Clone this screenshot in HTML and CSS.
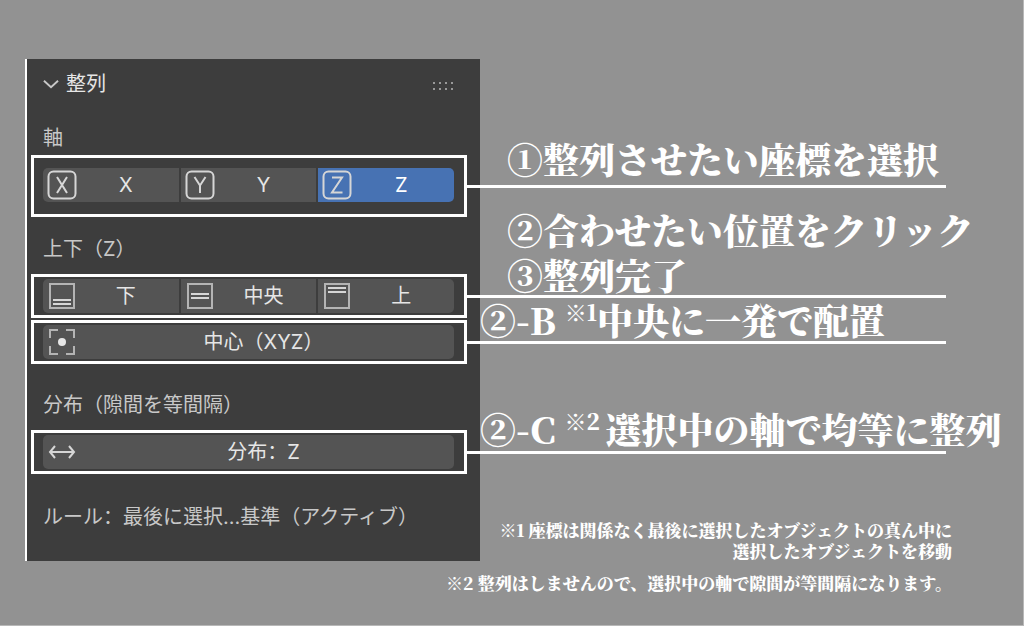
FILE: index.html
```html
<!DOCTYPE html>
<html lang="ja">
<head>
    <meta charset="UTF-8">
    <meta name="viewport" content="width=device-width, initial-scale=1.0">
    <title>整列</title>
    <link rel="stylesheet" href="styles.css">
</head>
<body>
    <main class="page">
        <section class="panel">
            <header class="panel_header">
                <svg class="chevron" viewBox="0 0 17 17"><path d="M1 5l7.500 7 7.500-7"/></svg>
                <h1>整列</h1>
                <svg class="grip" viewBox="0 0 20 8">
                    <path d="M0 0h2v2h-2zM6 0h2v2h-2zM12 0h2v2h-2zM18 0h2v2h-2zM0 6h2v2h-2zM6 6h2v2h-2zM12 6h2v2h-2zM18 6h2v2h-2z"/>
                </svg>
            </header>

            <p class="group_label">軸</p>
            <div class="frame frame_axis">
                <div class="buttons">
                    <button type="button">
                        <svg viewBox="0 0 30 30"><rect x="1.500" y="1.500" width="27" height="27" rx="5"/><path d="M10 7l10 16M20 7L10 23"/></svg>
                        <span>X</span>
                    </button>
                    <button type="button">
                        <svg viewBox="0 0 30 30"><rect x="1.500" y="1.500" width="27" height="27" rx="5"/><path d="M9.500 7l5.500 8.500 5.500-8.500M15 15.500V23"/></svg>
                        <span>Y</span>
                    </button>
                    <button type="button" class="active" aria-pressed="true">
                        <svg viewBox="0 0 30 30"><rect x="1.500" y="1.500" width="27" height="27" rx="5"/><path d="M10 7.500h10L10 22.500h10.500"/></svg>
                        <span>Z</span>
                    </button>
                </div>
            </div>

            <p class="group_label label_position">上下（Z）</p>
            <div class="frame">
                <div class="buttons">
                    <button type="button">
                        <svg viewBox="0 0 30 30"><path class="thin" d="M3 3h24v24H3z"/><path d="M6 19h18M6 23h18"/></svg>
                        <span>下</span>
                    </button>
                    <button type="button">
                        <svg viewBox="0 0 30 30"><path class="thin" d="M3 3h24v24H3z"/><path d="M6 13h18M6 17h18"/></svg>
                        <span>中央</span>
                    </button>
                    <button type="button">
                        <svg viewBox="0 0 30 30"><path class="thin" d="M3 3h24v24H3z"/><path d="M6 7h18M6 11h18"/></svg>
                        <span>上</span>
                    </button>
                </div>
            </div>
            <div class="frame frame_next">
                <div class="buttons">
                    <button type="button">
                        <svg viewBox="0 0 30 30"><path class="thin" d="M3 11V3h8M19 3h8v8M27 19v8h-8M11 27H3v-8"/><circle cx="15" cy="15" r="4"/></svg>
                        <span>中心（XYZ）</span>
                    </button>
                </div>
            </div>

            <p class="group_label label_spread">分布（隙間を等間隔）</p>
            <div class="frame">
                <div class="buttons">
                    <button type="button">
                        <svg viewBox="0 0 30 30"><path d="M3 15h24M8 9l-5 6 5 6M22 9l5 6-5 6"/></svg>
                        <span>分布：Z</span>
                    </button>
                </div>
            </div>

            <p class="group_label label_rule">ルール：最後に選択...基準（アクティブ）</p>
        </section>

        <section class="notes">
            <p class="note">①整列させたい座標を選択</p>
            <p class="note note_group">②合わせたい位置をクリック</p>
            <p class="note">③整列完了</p>
            <p class="note note_sub">②-B <sup>※1</sup>中央に一発で配置</p>
            <p class="note note_sub note_spread">②-C <sup>※2 </sup>選択中の軸で均等に整列</p>
            <footer class="footnotes">
                <p>※1 座標は関係なく最後に選択したオブジェクトの真ん中に<br>選択したオブジェクトを移動</p>
                <p>※2 整列はしませんので、選択中の軸で隙間が等間隔になります。</p>
            </footer>
        </section>
    </main>
</body>
</html>
```
FILE: styles.css
```css
*{
    box-sizing: border-box;
}
body{
    margin: 0;
    background-color: #929292;
}
h1,
p{
    margin: 0;
}
.page{
    display: grid;
    grid-template-columns: minmax(0, 455fr) minmax(0, 543fr);
    align-items: start;
    min-height: 100vh;
    padding: 59px 0 0 25px;
    border-right: 1px solid #b8b8b8;
    border-bottom: 1px solid #b8b8b8;
}

/* 左のパネル */
.panel{
    padding-bottom: 29px;
    border-left: 2px solid #fff;
    background-color: #3d3d3d;
    color: #c8c8c8;
    font-family: Inter, "Noto Sans CJK SC", "Noto Sans CJK JP", sans-serif;
    font-feature-settings: "locl" 0;
    font-size: 20px;
}
.panel_header{
    display: flex;
    align-items: center;
    gap: 7px;
    height: 50px;
    padding: 0 27px 0 16px;
}
.panel_header h1{
    flex: 1;
    color: #e6e6e6;
    font-size: 20px;
    font-weight: 400;
    line-height: 30px;
}
.chevron{
    width: 16px;
    fill: none;
    stroke: #c8c8c8;
    stroke-width: 2;
}
.grip{
    width: 20px;
    margin-top: 4px;
    fill: #999;
}
.group_label{
    margin: 14px 0 2px 16px;
    line-height: 30px;
    white-space: nowrap;
}
.label_position{
    margin-top: 17px;
}
.label_spread{
    margin-top: 26px;
}
.label_rule{
    margin-top: 28px;
    margin-bottom: 0;
}

/* 白枠と引き出し線 */
.frame{
    position: relative;
    margin: 10px 13px 0 4px;
    padding: 2px 10px 2px 9px;
    border: 3px solid #fff;
}
.frame::after{
    content: "";
    position: absolute;
    top: calc(50% - 1px);
    left: 100%;
    width: 112%;
    height: 3px;
    background-color: #fff;
}
.frame_axis{
    margin-top: 2px;
    padding-top: 10px;
    padding-bottom: 12px;
}
.frame_next{
    margin-top: 2px;
}
.buttons{
    display: grid;
    grid-auto-flow: column;
    grid-auto-columns: 1fr;
    gap: 2px;
    overflow: hidden;
    border-radius: 5px;
}
.buttons button{
    display: flex;
    align-items: center;
    height: 34px;
    padding: 0 4px;
    border: 0;
    background-color: #545454;
    color: #e6e6e6;
    font: inherit;
    font-feature-settings: inherit;
}
.buttons .active{
    background-color: #4772b3;
    color: #fff;
}
.buttons span{
    flex: 1;
    line-height: 30px;
    text-align: center;
}
.buttons svg{
    width: 30px;
    height: 30px;
    fill: none;
    stroke: #d6d6d6;
    stroke-width: 2;
}
.buttons .thin{
    stroke: #b4b4b4;
}
.buttons circle{
    fill: #e6e6e6;
    stroke: none;
}

/* 右の説明 */
.notes{
    position: relative;
    padding-top: 77px;
    color: #fff;
    font-family: "Noto Serif CJK JP", "Liberation Serif", "Noto Sans CJK JP", serif;
    font-weight: 900;
    white-space: nowrap;
}
.note{
    padding-left: 27px;
    font-size: 36px;
    line-height: 45px;
}
.note_group{
    margin-top: 26px;
}
.note_sub{
    padding-left: 0;
}
.note_spread{
    margin-top: 64px;
}
.note sup{
    font-size: 22px;
    line-height: 0;
    vertical-align: 14px;
}
.footnotes{
    margin-left: -40px;
    padding: 68px 71px 0 0;
    font-size: 17px;
    line-height: 21px;
    text-align: right;
}
.footnotes p + p{
    margin-top: 11px;
}
```
